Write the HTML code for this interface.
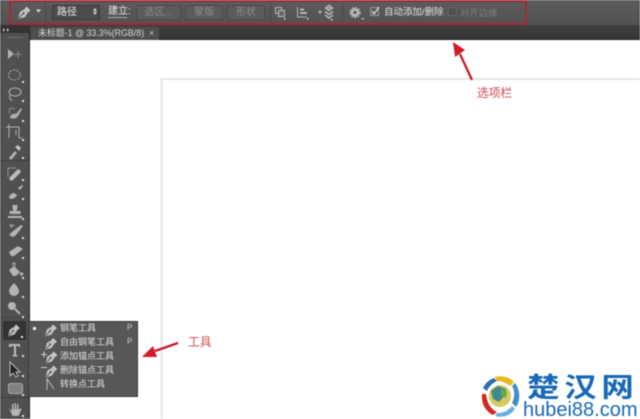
<!DOCTYPE html>
<html><head><meta charset="utf-8">
<style>
html,body{margin:0;padding:0;background:#fff}
#p{position:relative;width:640px;height:419px;overflow:hidden;background:#fff;font-family:"Liberation Sans","Noto Sans CJK SC",sans-serif;filter:blur(.4px)}
.a{position:absolute;white-space:nowrap}
.t{font-size:10px;line-height:12px;color:#d4d4d4}
.b{position:absolute;top:5px;height:13px;background:#5b5b5b;border:1px solid #4a4a4a;border-radius:1px;color:#8e8e8e;font-size:10px;line-height:13px;text-align:center}
.m{font-size:9px;line-height:12px;color:#e0e0e0;left:60px}
.r{color:#d4444c;font-size:11.7px;line-height:14px}
</style></head><body><div id="p">
<div class="a" style="left:0;top:0;width:640px;height:25px;background:linear-gradient(#5c5c5c,#525252)"></div>
<div class="a" style="left:0;top:25px;width:640px;height:15px;background:linear-gradient(#404040,#353535)"></div>
<div class="a" style="left:0;top:39px;width:640px;height:1px;background:#222"></div>
<div class="a" style="left:31px;top:27px;width:128px;height:13px;background:#4e4e4e"></div>
<div class="a t" style="left:38px;top:27px;font-size:8.9px;color:#d8d8d8">未标题-1 @ 33.3%(RGB/8)</div>
<div class="a t" style="left:149px;top:27px;color:#ccc;font-size:9px">×</div>

<svg class="a" style="left:0;top:0" width="640" height="419" xmlns="http://www.w3.org/2000/svg">
<defs>
<g id="pen">
<path d="M1 13.500L2.800 6.500L7.800 3.500L10.800 6.500L7.500 11.500Z" fill="#c4c4c4"/>
<path d="M1.500 13L5.800 8.300" stroke="#4a4a4a" stroke-width=".9"/>
<circle cx="6.200" cy="7.800" r="1" fill="#4a4a4a"/>
<path d="M8.300 2.300L12 6" stroke="#cfcfcf" stroke-width="2.200"/>
</g>
</defs>
<rect x="10" y="1" width="516" height="23" fill="none" stroke="#a02a38" stroke-width="2"/>
<use href="#pen" transform="translate(17 5) scale(1.05)"/>
<path d="M36 9.500h5l-2.500 3z" fill="#ddd"/>
<g stroke="#b8b8b8" fill="none" stroke-width="1">
<rect x="275.500" y="7.500" width="6" height="6"/><rect x="278.500" y="10.500" width="6" height="6" fill="#666"/>
<path d="M297.500 7v10h9" /><path d="M300 9.500h4M300 13h7" stroke-width="2"/>
<path d="M318 12h4M320 10v4"/><path d="M325 8l4-3 4 3-4 3z" fill="#999"/><path d="M325 11.500l4 3 4-3M325 15l4 3 4-3" stroke-width="1.500"/>
</g>
<circle cx="355" cy="12.500" r="2.800" fill="none" stroke="#bcbcbc" stroke-width="2.400"/>
<circle cx="355" cy="12.500" r="4.800" fill="none" stroke="#bcbcbc" stroke-width="1.500" stroke-dasharray="2 1.200"/>
<g fill="#ddd"><rect x="284" y="18" width="1.500" height="1.500"/><rect x="307" y="18" width="1.500" height="1.500"/><rect x="331" y="19" width="1.500" height="1.500"/><rect x="362" y="18" width="1.500" height="1.500"/></g>
<rect x="270" y="3" width="1" height="19" fill="#474747"/><rect x="342" y="3" width="1" height="19" fill="#474747"/>
<rect x="45" y="3" width="1" height="19" fill="#484848"/>
<rect x="370.500" y="7.500" width="8" height="8" fill="#5a5a5a" stroke="#999"/>
<path d="M372 11l2 3 5-7" stroke="#e0e0e0" fill="none" stroke-width="1.200"/>
<rect x="448.500" y="7.500" width="8" height="8" fill="#4f4f4f" stroke="#646464"/>

<!-- tools panel -->
<rect x="0" y="33" width="30" height="386" fill="#505050"/>
<rect x="29" y="33" width="1" height="386" fill="#2a2a2a"/>
<rect x="0" y="25" width="30" height="8" fill="#333"/>
<path d="M3 28l2 2-2 2zM7 28l2 2-2 2z" fill="#ccc"/>
<rect x="7" y="37" width="16" height="1" fill="#707070"/>
<rect x="0" y="160" width="29" height="1" fill="#3d3d3d"/>
<rect x="0" y="317" width="29" height="1" fill="#454545"/>
<rect x="0" y="397" width="29" height="1" fill="#3d3d3d"/>
<g fill="#b4b4b4" stroke="none">
<path d="M8 49v10l6-5z"/><path d="M15 54.500h6M18 51.500v6" stroke="#b4b4b4" stroke-dasharray="1.500 .8"/>
<path d="M10 118c0-3 3-5 6-4l5-6 1 1-4 7c-2 3-5 3-8 2z" fill="#b0b0b0"/>
<rect x="9" y="108" width="6" height="1" fill="#8c8c8c"/><rect x="9" y="108" width="1" height="6" fill="#8c8c8c"/>
<path d="M9 158l6-7 2 2-6 7z"/><path d="M15 147l3-2 3 3-2 3z" fill="#c4c4c4"/>
<path d="M10 177l7-7c2-2 5 1 3 3l-7 7c-2 2-5-1-3-3z" fill="#bcbcbc"/>
<path d="M8 168h8M8 168v9" stroke="#969696" fill="none"/>
<path d="M18 188l4-3 1 1-3 4z"/><path d="M9 198c0-3 3-5 5-5l3 2c-1 3-5 5-8 3z"/>
<path d="M12.500 205h5v3l-1 3h4v3H9.500v-3h4l-1-3z"/><rect x="8" y="216" width="14" height="2"/>
<path d="M9 235l3-3 9-7 2 1-7 9-3 2z"/><path d="M9 224l6 1-4 3z" fill="#999"/>
<path d="M9 252l9-6 5 3-9 7h-3z"/>
<path d="M9 270l5-4 6 6-4 4h-3z"/><circle cx="21.500" cy="274" r="1.700"/><path d="M13 266v-3h2v3" stroke="#b4b4b4" fill="none"/>
<path d="M14 283c-3 3-5 6-5 8a5 5 0 0 0 10 0c0-2-2-5-5-8z"/>
<circle cx="12" cy="306" r="4"/><path d="M15 309l5 5" stroke="#b4b4b4" stroke-width="2"/>
<path d="M9 344h11v3h-1l-.5-1h-2.500v9h1.500v1.500h-5V355h1.500v-9h-2.500l-.5 1H9z" fill="#bcbcbc"/>
<path d="M10 362v14l3-3 3 4 2-1-2-4h4z" fill="#222" stroke="#bcbcbc"/>
<rect x="8.500" y="383.500" width="14" height="10" rx="2" fill="#808080" stroke="#a8a8a8"/>
<path d="M9 408l3 3v-7h1.500v5h1v-6h1.500v6h1v-5h1.500v6l2-2 1 1-3 7h-6z"/>
</g>
<g fill="none" stroke="#b4b4b4">
<ellipse cx="14.500" cy="75" rx="6" ry="5" stroke-dasharray="2 1.500"/>
<ellipse cx="15" cy="92" rx="6" ry="4"/><path d="M10 95c-1 3 0 4 2 6"/>
<path d="M10 125v14M7 128h13v11M20 139h3M17 136v-5" transform="translate(-1 -1)"/>
</g>
<g fill="#e0e0e0">
<rect x="22" y="81" width="2" height="2"/><rect x="22" y="100" width="2" height="2"/><rect x="22" y="120" width="2" height="2"/><rect x="22" y="139" width="2" height="2"/><rect x="22" y="157" width="2" height="2"/><rect x="22" y="179" width="2" height="2"/><rect x="22" y="198" width="2" height="2"/><rect x="22" y="218" width="2" height="2"/><rect x="22" y="237" width="2" height="2"/><rect x="22" y="257" width="2" height="2"/><rect x="22" y="277" width="2" height="2"/><rect x="22" y="296" width="2" height="2"/><rect x="22" y="316" width="2" height="2"/><rect x="22" y="355" width="2" height="2"/><rect x="22" y="375" width="2" height="2"/><rect x="22" y="394" width="2" height="2"/><rect x="22" y="415" width="2" height="2"/>
</g>
<rect x="3" y="321" width="23" height="19" rx="1" fill="#333"/>
<use href="#pen" transform="translate(7 323)"/><rect x="21" y="336" width="2" height="2" fill="#eee"/>

<!-- canvas -->
<rect x="161" y="78" width="479" height="2" fill="#e6e6e6"/>
<rect x="160.500" y="78" width="2" height="341" fill="#e6e6e6"/>

<!-- flyout -->
<rect x="28.500" y="321.500" width="109" height="75" fill="#575757" stroke="#3a3a3a"/>
<rect x="33" y="327" width="3" height="3" fill="#eee"/>
<use href="#pen" transform="translate(44 323)"/>
<use href="#pen" transform="translate(44 336.500)"/>
<use href="#pen" transform="translate(44.500 350)"/>
<use href="#pen" transform="translate(44.500 364)"/>
<g fill="#d0d0d0"><rect x="41" y="354" width="6" height="1"/><rect x="43.500" y="351.500" width="1" height="6"/><rect x="41" y="367" width="6" height="1"/></g>
<path d="M47 390v-11l7 10" fill="none" stroke="#bdbdbd"/>

<!-- arrows -->
<path d="M472 80L460 54" stroke="#cc1a28" stroke-width="2.300"/><path d="M453 42l12 8-10 7z" fill="#d01a28"/>
<path d="M178 343L155 351" stroke="#cc1a28" stroke-width="2.300"/><path d="M142 357l11-11 4 11z" fill="#d01a28"/>

<!-- logo -->
<circle cx="500" cy="396" r="20" fill="#fff"/>
<path d="M483 388a19 19 0 0 1 11-10l3 3c-4 2-8 5-10 10z" fill="#2f6fb0"/>
<path d="M482 394c-1 9 3 17 11 21l4-3c-7-3-10-10-11-18z" fill="#cf2a26"/>
<path d="M495 377c7-2 14 0 19 5l-4 4c-4-3-8-5-13-5z" fill="#eab71c"/>
<path d="M515 383c5 6 6 17 1 24l-4-4c3-6 3-12 0-17z" fill="#3d8fc8"/>
<path d="M495 416c8 2 15 0 20-7l-3-3c-4 5-9 7-15 7z" fill="#69b0e0"/>
<circle cx="500" cy="396" r="11" fill="#d8c860"/>
<path d="M491 391l7-5 8 3-1 6-6 7-6-3z" fill="#3f8a8f"/>
<path d="M501 388l6 4-1 6-5-2z" fill="#6aa84a"/>
</svg>

<div class="a" style="left:52px;top:5px;width:46px;height:13px;background:#4b4b4b;border:1px solid #3c3c3c"></div>
<div class="a t" style="left:57px;top:7px;color:#eee">路径</div>
<div class="a" style="left:93px;top:8px;width:0;height:0;border:2.500px solid transparent;border-top:0;border-bottom:3px solid #ddd"></div>
<div class="a" style="left:93px;top:12px;width:0;height:0;border:2.500px solid transparent;border-bottom:0;border-top:3px solid #ddd"></div>
<div class="a t" style="left:108px;top:6px;color:#e8e8e8">建立:</div>
<div class="a" style="left:108px;top:17px;width:19px;height:1px;background:#aaa"></div>
<div class="b" style="left:136px;width:43px">选区...</div>
<div class="b" style="left:185px;width:36px">蒙版</div>
<div class="b" style="left:227px;width:36px">形状</div>
<div class="a t" style="left:384px;top:6.500px;font-size:9.500px;color:#e2e2e2">自动添加/删除</div>
<div class="a t" style="left:460px;top:6.500px;font-size:9.300px;color:#7d7d7d">对齐边缘</div>

<div class="a m" style="top:322px">钢笔工具</div><div class="a m" style="left:127px;top:322px;font-size:8px;color:#ccc">P</div>
<div class="a m" style="top:336px">自由钢笔工具</div><div class="a m" style="left:127px;top:336px;font-size:8px;color:#ccc">P</div>
<div class="a m" style="top:350px">添加锚点工具</div>
<div class="a m" style="top:364px">删除锚点工具</div>
<div class="a m" style="top:378px">转换点工具</div>

<div class="a r" style="left:477px;top:87px">选项栏</div>
<div class="a r" style="left:188px;top:336px">工具</div>

<div class="a" style="left:527px;top:375px;font-size:27px;line-height:27px;font-weight:bold;color:#1668b8;letter-spacing:4px;transform:scaleX(1.2);transform-origin:0 0">楚汉网</div>
<div class="a" style="left:523px;top:400px;font-size:20px;line-height:20px;color:#1668b8">hubei88.com</div>
</div></body></html>
